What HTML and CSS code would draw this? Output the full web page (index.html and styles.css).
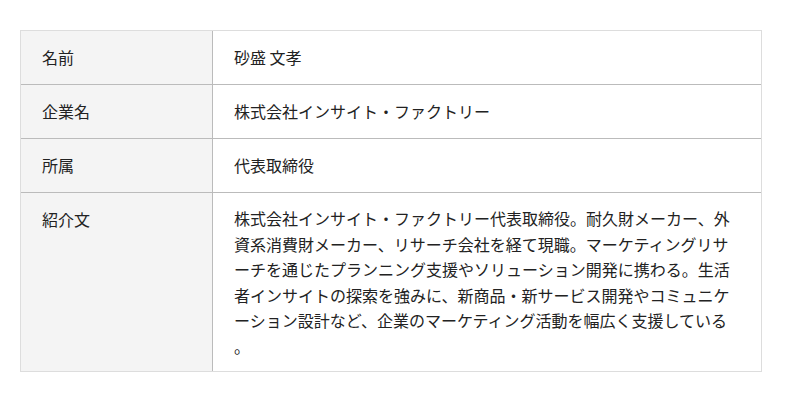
FILE: index.html
```html
<!DOCTYPE html>
<html lang="ja">
<head>
<meta charset="utf-8">
<link rel="stylesheet" href="styles.css">
</head>
<body>
<table class="profile">
  <tr>
    <th class="label">名前</th>
    <td class="value">砂盛 文孝</td>
  </tr>
  <tr>
    <th class="label">企業名</th>
    <td class="value">株式会社インサイト・ファクトリー</td>
  </tr>
  <tr>
    <th class="label">所属</th>
    <td class="value">代表取締役</td>
  </tr>
  <tr>
    <th class="label">紹介文</th>
    <td class="value bio">株式会社インサイト・ファクトリー代表取締役。耐久財メーカー、外資系消費財メーカー、リサーチ会社を経て現職。マーケティングリサーチを通じたプランニング支援やソリューション開発に携わる。生活者インサイトの探索を強みに、新商品・新サービス開発やコミュニケーション設計など、企業のマーケティング活動を幅広く支援している。</td>
  </tr>
</table>
</body>
</html>
```

FILE: styles.css
```css
html, body {
  margin: 0;
  padding: 0;
  background: #ffffff;
}
body {
  padding: 30px 20px 0 20px;
  font-family: "Noto Sans CJK JP", "Noto Sans", sans-serif;
  font-size: 16px;
  color: #222222;
}
.profile {
  width: 742px;
  border-collapse: separate;
  border-spacing: 0;
  border: 1px solid #dddddd;
  table-layout: fixed;
}
.label {
  width: 149px;
  background: #f4f4f4;
  font-weight: normal;
  text-align: left;
  vertical-align: top;
  padding: 14px 21px;
  line-height: 25px;
  border-right: 1px solid #bbbbbb;
}
.value {
  padding: 14px 21px;
  line-height: 25px;
  vertical-align: top;
  line-break: anywhere;
}
.profile tr + tr .label,
.profile tr + tr .value {
  border-top: 1px solid #bbbbbb;
}
.bio {
  line-height: 25.5px;
  padding-top: 13px;
  padding-bottom: 12px;
}
```
